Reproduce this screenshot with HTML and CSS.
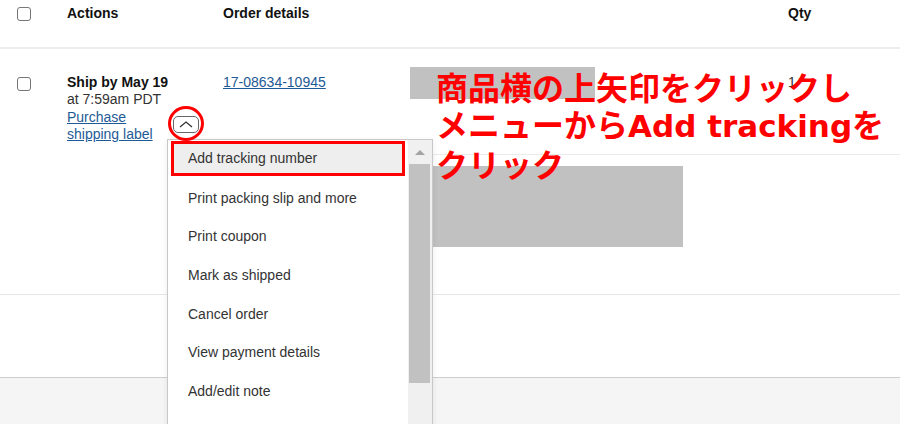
FILE: index.html
```html
<!DOCTYPE html>
<html lang="en">
<head>
    <meta charset="UTF-8">
    <meta name="viewport" content="width=device-width, initial-scale=1.0">
    <title>Manage Orders</title>
    <link rel="stylesheet" href="styles.css">
</head>
<body>
    <div class="orders">
        <div class="thead">
            <div class="cell-check"><span class="checkbox head-check"></span></div>
            <div>Actions</div>
            <div>Order details</div>
            <div></div>
            <div>Qty</div>
        </div>

        <div class="row">
            <div class="cell-check"><span class="checkbox row-check"></span></div>
            <div class="actions">
                <div class="ship-text">
                    <b>Ship by May 19</b><br>
                    at 7:59am PDT<br>
                    <a href="#">Purchase shipping label</a>
                </div>
                <button class="more-btn" type="button">
                    <svg width="14" height="7" viewBox="0 0 14 7"><polyline points="1,6 7,1 13,6" fill="none" stroke="#333" stroke-width="1.3"/></svg>
                </button>
            </div>
            <div class="order-id"><a href="#">17-08634-10945</a></div>
            <div class="product">
                <div class="product-top">
                    <div class="redact redact-title"></div>
                    <div class="qty">1</div>
                </div>
                <div class="product-line"></div>
                <div class="redact redact-info"></div>
            </div>
        </div>

        <div class="spacer"></div>
        <div class="footer"></div>

        <!-- open action menu -->
        <div class="menu">
            <ul class="menu-list">
                <li class="active">Add tracking number</li>
                <li>Print packing slip and more</li>
                <li>Print coupon</li>
                <li>Mark as shipped</li>
                <li>Cancel order</li>
                <li>View payment details</li>
                <li>Add/edit note</li>
            </ul>
            <div class="scrollbar">
                <div class="scroll-up"><span class="arrow"></span></div>
                <div class="thumb"></div>
            </div>
        </div>

        <!-- annotation -->
        <span class="ring"></span>
        <div class="note">商品横の上矢印をクリックし<br>メニューから<span class="latin">Add tracking</span>を<br>クリック</div>
    </div>
</body>
</html>
```

FILE: styles.css
```css
body {
    margin: 0;
    padding: 0;
    font-family: "Liberation Sans", Arial, sans-serif;
    font-size: 14px;
    color: #333;
    background-color: white;
    width: 900px;
    height: 424px;
    overflow: hidden;
}
.orders {
    position: relative;
    height: 424px;
    display: flex;
    flex-direction: column;
}
.thead {
    display: grid;
    grid-template-columns: 67px 156px 187px 378px 1fr;
    box-sizing: border-box;
    height: 49px;
    padding-top: 5px;
    line-height: 16px;
    font-weight: bold;
    color: #111;
    border-bottom: 2px solid #ededed;
    flex: none;
}
.cell-check {
    padding-left: 17px;
}
.checkbox {
    display: block;
    width: 14px;
    height: 14px;
    box-sizing: border-box;
    border: 1px solid #767676;
    border-radius: 3px;
}
.head-check {
    margin-top: 2px;
}
.row-check {
    margin-top: 3px;
}
.row {
    display: grid;
    grid-template-columns: 67px 156px 187px 1fr;
    height: 246px;
    box-sizing: border-box;
    padding-top: 25px;
    line-height: 17.3px;
    border-bottom: 1px solid #e6e6e6;
    flex: none;
}
.row b {
    color: #111;
}
a {
    color: #1e5a96;
}
.actions {
    display: flex;
    align-items: flex-start;
}
.ship-text {
    width: 106px;
}
.more-btn {
    margin-top: 42px;
    width: 26px;
    height: 17px;
    padding: 0;
    border: 1px solid #666;
    border-radius: 5px;
    background: white;
    display: flex;
    align-items: center;
    justify-content: center;
}
.product {
    margin-top: -7px;
}
.product-top {
    display: grid;
    grid-template-columns: 378px 1fr;
}
.redact {
    background-color: #c1c1c1;
}
.redact-title {
    width: 185px;
    height: 32px;
}
.qty {
    padding-top: 7px;
}
.product-line {
    margin-top: 55px;
    border-top: 1px solid #ebebeb;
}
.redact-info {
    margin-top: 11px;
    width: 273px;
    height: 81px;
}
.spacer {
    height: 82px;
    flex: none;
}
.footer {
    flex: 1;
    background-color: #f5f5f5;
    border-top: 1px solid #cdcdcd;
}
.menu {
    position: absolute;
    left: 167px;
    top: 139px;
    width: 266px;
    height: 300px;
    box-sizing: border-box;
    border: 1px solid #c8c8c8;
    background: white;
    display: flex;
    box-shadow: 0 2px 6px rgba(0, 0, 0, 0.08);
}
.menu-list {
    list-style: none;
    margin: 0;
    padding: 0;
    flex: 1;
}
.menu-list li {
    height: 38.7px;
    line-height: 38.7px;
    padding-left: 20px;
    box-sizing: border-box;
    white-space: nowrap;
}
.menu-list li.active {
    height: 35px;
    line-height: 29px;
    margin: 1px 3px 2.7px 3px;
    padding-left: 14px;
    border: 3px solid #f00;
    background-color: #eee;
}
.scrollbar {
    width: 24px;
    background-color: #f0f0f0;
    padding: 0 2px 0 1px;
    box-sizing: border-box;
}
.scroll-up {
    height: 24px;
    display: flex;
    align-items: center;
    justify-content: center;
}
.arrow {
    width: 0;
    height: 0;
    border-left: 5px solid transparent;
    border-right: 5px solid transparent;
    border-bottom: 5px solid #a3a3a3;
}
.thumb {
    height: 219px;
    background-color: #c1c1c1;
}
.ring {
    position: absolute;
    left: 168px;
    top: 106px;
    width: 36px;
    height: 35px;
    box-sizing: border-box;
    border: 3px solid #f00;
    border-radius: 50%;
}
.note {
    position: absolute;
    left: 436px;
    top: 68px;
    font-family: "Noto Sans CJK JP", sans-serif;
    font-size: 32px;
    font-weight: bold;
    line-height: 37px;
    color: #f00;
    white-space: nowrap;
}
.note .latin {
    font-family: "DejaVu Sans", sans-serif;
    font-size: 31px;
}
```
